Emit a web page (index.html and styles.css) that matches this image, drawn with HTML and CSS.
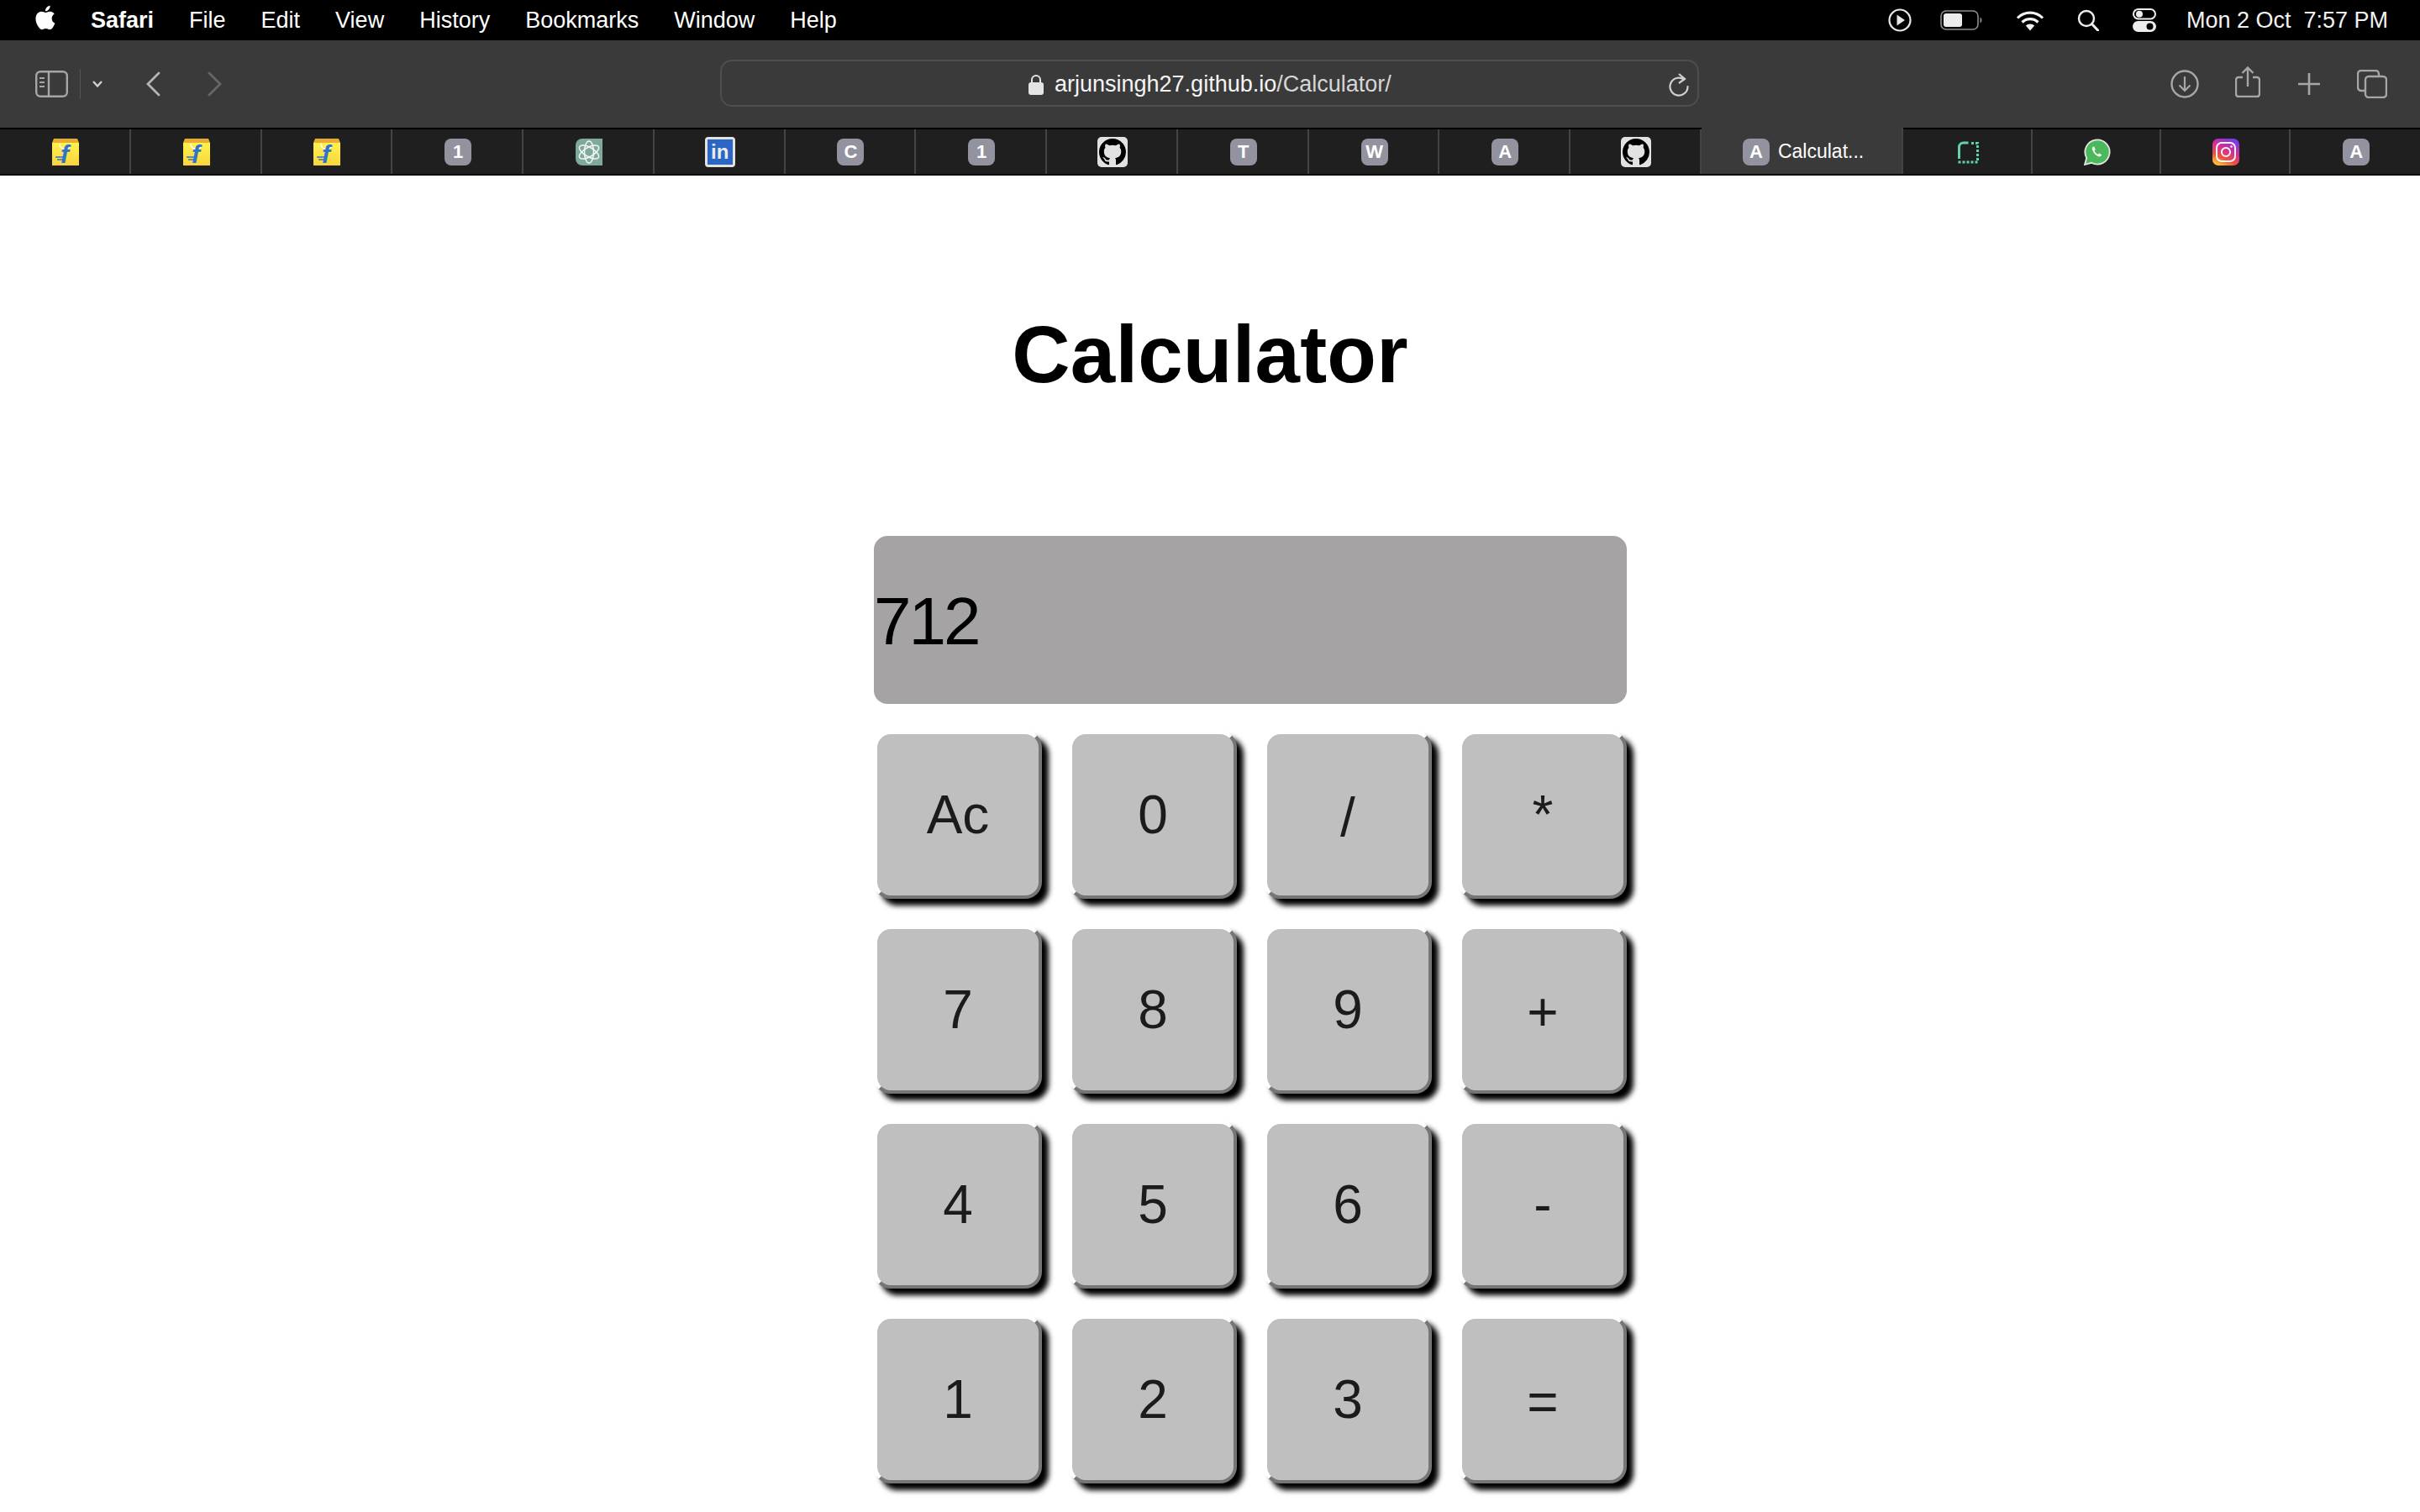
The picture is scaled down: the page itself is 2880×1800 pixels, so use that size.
FILE: index.html
```html
<!DOCTYPE html>
<html lang="en">
<head>
  <meta charset="UTF-8">
  <meta name="viewport" content="width=device-width, initial-scale=1.0">
  <title>Calculator</title>
  <link rel="stylesheet" href="styles.css">
</head>
<body>
  <svg class="defs" xmlns="http://www.w3.org/2000/svg">
    <defs>
      <linearGradient id="bag" x1="0" y1="0" x2="0" y2="1">
        <stop offset="0" stop-color="#fff24f"/>
        <stop offset="1" stop-color="#f9d53e"/>
      </linearGradient>
      <linearGradient id="insta" x1="0.8" y1="0" x2="0.3" y2="1">
        <stop offset="0" stop-color="#6a3df0"/>
        <stop offset="0.4" stop-color="#d42a9e"/>
        <stop offset="0.75" stop-color="#f4503c"/>
        <stop offset="1" stop-color="#fbbd2e"/>
      </linearGradient>
      <symbol id="flipkart" viewBox="0 0 32 32">
        <path d="M2 0h28l2 5H0z" fill="#e8ad2f"/>
        <rect y="5" width="32" height="27" fill="url(#bag)"/>
        <path d="M9 6c0 9 13 9 13 0" fill="none" stroke="#fff" stroke-width="1.5"/>
        <path d="M4 22h9M6 25h7" stroke="#2f74c8" stroke-width="1.5"/>
        <text x="10" y="29" class="flip-f">f</text>
      </symbol>
      <symbol id="gpt" viewBox="0 0 32 32">
        <path d="M8 0h24v32H8a8 8 0 0 1-8-8V8a8 8 0 0 1 8-8z" fill="#7fa99b"/>
        <g fill="none" stroke="#f2f6f4" stroke-width="1.5">
          <ellipse cx="16" cy="16" rx="5.500" ry="13"/>
          <ellipse cx="16" cy="16" rx="5.500" ry="13" transform="rotate(60 16 16)"/>
          <ellipse cx="16" cy="16" rx="5.500" ry="13" transform="rotate(120 16 16)"/>
        </g>
      </symbol>
      <symbol id="github" viewBox="0 0 36 36">
        <rect width="36" height="36" rx="5" fill="#e2e2e2"/>
        <g transform="translate(2 2)">
          <path fill="#000" fill-rule="evenodd" d="M16 0C7.16 0 0 7.16 0 16c0 7.08 4.58 13.06 10.94 15.18.8.14 1.1-.34 1.1-.76 0-.38-.02-1.64-.02-2.98-4.02.74-5.06-.98-5.38-1.88-.18-.46-.96-1.88-1.64-2.26-.56-.3-1.36-1.04-.02-1.06 1.26-.02 2.16 1.16 2.46 1.64 1.44 2.42 3.74 1.74 4.66 1.32.14-1.04.56-1.74 1.02-2.14-3.56-.4-7.28-1.78-7.28-7.9 0-1.74.62-3.18 1.64-4.3-.16-.4-.72-2.04.16-4.24 0 0 1.34-.42 4.4 1.64 1.28-.36 2.64-.54 4-.54 1.36 0 2.72.18 4 .54 3.06-2.08 4.4-1.64 4.4-1.64.88 2.2.32 3.84.16 4.24 1.02 1.12 1.64 2.54 1.64 4.3 0 6.14-3.74 7.5-7.3 7.9.58.5 1.08 1.46 1.08 2.96 0 2.14-.02 3.86-.02 4.4 0 .42.3.92 1.1.76A16.03 16.03 0 0 0 32 16C32 7.16 24.84 0 16 0z"/>
        </g>
      </symbol>
      <symbol id="whatsapp" viewBox="0 0 32 32">
        <path d="M1 31l2.2-8A14.6 14.6 0 1 1 9 28.8z" fill="#4cb85c" stroke="#e4e4e4" stroke-width="1.8"/>
        <path d="M11 9.500c-1.600 1-1.600 3 0 6 1.800 3.200 4.500 5.500 7 6 1.500.2 3-.8 3.200-2.200l-3-1.800-1.500 1.200c-1.700-.8-3.400-2.600-4.200-4.300l1.200-1.400-1.300-3.300z" fill="#f4f4f4"/>
      </symbol>
      <symbol id="insta-logo" viewBox="0 0 32 32">
        <rect width="32" height="32" rx="7" fill="url(#insta)"/>
        <rect x="5" y="5" width="22" height="22" rx="6" fill="none" stroke="#fff" stroke-width="2"/>
        <circle cx="16" cy="16" r="5" fill="none" stroke="#fff" stroke-width="2"/>
        <circle cx="22.500" cy="9.500" r="1.300" fill="#fff"/>
      </symbol>
      <symbol id="dotted" viewBox="0 0 32 32">
        <path d="M5.500 24V10a5 5 0 0 1 5-5h6" fill="none" stroke="#5fd3ae" stroke-width="3"/>
        <path d="M20 5.500h7.500v22.500H4" fill="none" stroke="#5fd3ae" stroke-width="3" stroke-dasharray="3 2"/>
      </symbol>
    </defs>
  </svg>

  <header class="menubar">
    <svg class="apple" viewBox="0 0 24 24"><path fill="#fff" d="M18.710 19.500c-.83 1.240-1.710 2.450-3.050 2.470-1.340.03-1.770-.79-3.290-.79-1.530 0-2 .77-3.270.82-1.310.05-2.300-1.320-3.140-2.530C4.250 17 2.940 12.450 4.700 9.390c.87-1.520 2.430-2.480 4.120-2.510 1.280-.02 2.500.87 3.290.87.78 0 2.260-1.070 3.810-.91.65.03 2.470.26 3.640 1.980-.09.06-2.170 1.280-2.150 3.810.03 3.020 2.650 4.030 2.680 4.040-.03.07-.42 1.440-1.380 2.830M13 3.500c.73-.83 1.940-1.460 2.940-1.500.13 1.170-.34 2.350-1.040 3.190-.69.85-1.830 1.510-2.950 1.420-.15-1.150.41-2.350 1.050-3.110z"/></svg>
    <nav class="menu">
      <span class="app-name">Safari</span>
      <span>File</span>
      <span>Edit</span>
      <span>View</span>
      <span>History</span>
      <span>Bookmarks</span>
      <span>Window</span>
      <span>Help</span>
    </nav>
    <div class="status">
      <svg class="st-play" width="28" height="28" viewBox="0 0 28 28"><circle cx="14" cy="14" r="12.500" fill="none" stroke="#e8e8e8" stroke-width="2.200"/><path d="M10.500 7.500v13l9.500-6.500z" fill="#e8e8e8"/></svg>
      <svg class="st-battery" width="50" height="24" viewBox="0 0 50 24"><rect x="1" y="1" width="44" height="22" rx="6" fill="none" stroke="#8c8c8c" stroke-width="1.600"/><rect x="4" y="4" width="22" height="16" rx="3" fill="#ececec"/><path d="M47.500 8.500c1.500.8 2 2 2 3.500s-.5 2.700-2 3.500z" fill="#8c8c8c"/></svg>
      <svg class="st-wifi" width="34" height="25" viewBox="0 0 34 25"><g fill="none" stroke="#f2f2f2" stroke-width="3.200"><path d="M2 9.500a21 21 0 0 1 30 0"/><path d="M7.500 14.500a13.500 13.500 0 0 1 19 0"/></g><path d="M11.800 18.500a7.500 7.500 0 0 1 10.400 0L17 24.500z" fill="#f2f2f2"/></svg>
      <svg class="st-search" width="26" height="26" viewBox="0 0 26 26"><circle cx="11" cy="11" r="9" fill="none" stroke="#eee" stroke-width="2.400"/><path d="M17.500 17.500l7 7.500" stroke="#eee" stroke-width="3" stroke-linecap="round"/></svg>
      <svg class="st-control" width="28" height="28" viewBox="0 0 28 28"><rect x="1" y="1" width="26" height="11.500" rx="5.700" fill="none" stroke="#eee" stroke-width="2"/><circle cx="8" cy="6.700" r="4" fill="#eee"/><rect x="0" y="15" width="28" height="13" rx="6.500" fill="#eee"/><circle cx="20.500" cy="21.500" r="4" fill="#000"/></svg>
      <span class="clock">Mon 2 Oct&nbsp; 7:57 PM</span>
    </div>
  </header>

  <div class="toolbar">
    <div class="tool-left">
      <svg class="ic-sidebar" width="39" height="32" viewBox="0 0 39 32"><rect x="1.200" y="1.200" width="36.600" height="29.600" rx="5" fill="none" stroke="#a6a6a6" stroke-width="2.400"/><path d="M16 1v30" stroke="#a6a6a6" stroke-width="2.400"/><path d="M5 9h6M5 14h6M5 19h6" stroke="#a6a6a6" stroke-width="2.200"/></svg>
      <span class="tool-sep"></span>
      <svg class="ic-drop" width="14" height="10" viewBox="0 0 14 10"><path d="M2 2l5 5.500L12 2" fill="none" stroke="#cfcfcf" stroke-width="2.400"/></svg>
      <svg class="ic-back" width="18" height="30" viewBox="0 0 18 30"><path d="M16 2L3 15l13 13" fill="none" stroke="#b5b5b5" stroke-width="2.800" stroke-linecap="round"/></svg>
      <svg class="ic-forward" width="18" height="30" viewBox="0 0 18 30"><path d="M2 2l13 13L2 28" fill="none" stroke="#666" stroke-width="2.800" stroke-linecap="round"/></svg>
    </div>
    <div class="urlbar">
      <svg class="lock" width="18" height="25" viewBox="0 0 18 25"><path d="M4 11V7a5 5 0 0 1 10 0v4" fill="none" stroke="#e4e4e4" stroke-width="2"/><rect y="10" width="18" height="15" rx="3" fill="#e4e4e4"/></svg>
      <span class="url">arjunsingh27.github.io<span class="url-path">/Calculator/</span></span>
      <svg class="reload" width="26" height="28" viewBox="0 0 26 28"><path d="M19 7.500A10.500 10.500 0 1 0 23.500 16" fill="none" stroke="#d0d0d0" stroke-width="2.200" stroke-linecap="round"/><path d="M13 1l7 6-7 5" fill="none" stroke="#d0d0d0" stroke-width="2.200"/></svg>
    </div>
    <div class="tool-right">
      <svg class="ic-download" width="34" height="34" viewBox="0 0 34 34"><circle cx="17" cy="17" r="15.500" fill="none" stroke="#a6a6a6" stroke-width="2.400"/><path d="M17 8v17M10.500 18.500L17 25l6.500-6.500" fill="none" stroke="#a6a6a6" stroke-width="2.200"/></svg>
      <svg class="ic-share" width="30" height="37" viewBox="0 0 30 37"><path d="M9 13H4a3 3 0 0 0-3 3v17a3 3 0 0 0 3 3h22a3 3 0 0 0 3-3V16a3 3 0 0 0-3-3h-5" fill="none" stroke="#a6a6a6" stroke-width="2.400"/><path d="M15 24V2M8.500 8L15 1.500 21.500 8" fill="none" stroke="#a6a6a6" stroke-width="2.400"/></svg>
      <svg class="ic-plus" width="28" height="28" viewBox="0 0 28 28"><path d="M14 1v26M1 14h26" stroke="#a6a6a6" stroke-width="2.600"/></svg>
      <svg class="ic-tabs" width="36" height="34" viewBox="0 0 36 34"><path d="M9 25H5a4 4 0 0 1-4-4V5a4 4 0 0 1 4-4h17a4 4 0 0 1 4 4v3" fill="none" stroke="#a6a6a6" stroke-width="2.400"/><rect x="10" y="8" width="25" height="25" rx="4" fill="none" stroke="#a6a6a6" stroke-width="2.400"/></svg>
    </div>
  </div>

  <div class="tabs">
    <div class="tab"><svg class="fav"><use href="#flipkart"/></svg></div>
    <div class="tab"><svg class="fav"><use href="#flipkart"/></svg></div>
    <div class="tab"><svg class="fav"><use href="#flipkart"/></svg></div>
    <div class="tab"><span class="letter">1</span></div>
    <div class="tab"><svg class="fav"><use href="#gpt"/></svg></div>
    <div class="tab"><span class="linkedin"><span class="in">in</span></span></div>
    <div class="tab"><span class="letter">C</span></div>
    <div class="tab"><span class="letter">1</span></div>
    <div class="tab"><svg class="fav-big"><use href="#github"/></svg></div>
    <div class="tab"><span class="letter">T</span></div>
    <div class="tab"><span class="letter">W</span></div>
    <div class="tab"><span class="letter">A</span></div>
    <div class="tab"><svg class="fav-big"><use href="#github"/></svg></div>
    <div class="tab active"><span class="letter">A</span><span class="tab-title">Calculat...</span></div>
    <div class="tab narrow"><svg class="fav"><use href="#dotted"/></svg></div>
    <div class="tab narrow"><svg class="fav"><use href="#whatsapp"/></svg></div>
    <div class="tab narrow"><svg class="fav"><use href="#insta-logo"/></svg></div>
    <div class="tab narrow last"><span class="letter">A</span></div>
  </div>

  <main class="page">
    <h1>Calculator</h1>
    <div class="calc">
      <div class="display">712</div>
      <div class="keys">
        <button>Ac</button>
        <button>0</button>
        <button class="low">/</button>
        <button>*</button>
        <button>7</button>
        <button>8</button>
        <button>9</button>
        <button class="low">+</button>
        <button>4</button>
        <button>5</button>
        <button>6</button>
        <button>-</button>
        <button>1</button>
        <button>2</button>
        <button>3</button>
        <button class="low">=</button>
      </div>
    </div>
  </main>
</body>
</html>
```

FILE: styles.css
```css
* {
  box-sizing: border-box;
}
html, body {
  margin: 0;
  height: 1800px;
  overflow: hidden;
}
body {
  background-color: #fff;
  color: #000;
  font-family: "Liberation Sans", Arial, sans-serif;
}
.defs {
  display: block;
  width: 0;
  height: 0;
}
.flip-f {
  font: italic bold 30px "Liberation Sans", Arial, sans-serif;
  fill: #2f74c8;
}

/* menu bar */
.menubar {
  height: 48px;
  background-color: #000;
  color: #fff;
  display: flex;
  align-items: center;
  font-size: 27px;
  padding-left: 40px;
  padding-right: 38px;
}
.apple {
  width: 34px;
  height: 34px;
  margin-left: -3px;
  margin-top: -6px;
}
.menu {
  display: flex;
  gap: 42px;
  margin-left: 37px;
}
.app-name {
  font-weight: bold;
}
.status {
  display: flex;
  align-items: center;
  margin-left: auto;
}
.st-battery { margin-left: 34px; }
.st-wifi { margin-left: 40px; }
.st-search { margin-left: 39px; }
.st-control { margin-left: 40px; }
.clock {
  margin-left: 36px;
  font-size: 27px;
  color: #f2f2f2;
}

/* toolbar */
.toolbar {
  height: 104px;
  background-color: #3a3a3a;
  display: flex;
  align-items: center;
}
.tool-left {
  width: 857px;
  display: flex;
  align-items: center;
  padding-left: 42px;
}
.tool-sep {
  width: 1px;
  height: 36px;
  background-color: #555;
  margin-left: 14px;
}
.ic-drop { margin-left: 13px; }
.ic-back { margin-left: 50px; }
.ic-forward { margin-left: 56px; }
.urlbar {
  width: 1165px;
  height: 56px;
  border: 2px solid #4e4e4e;
  border-radius: 14px;
  display: flex;
  align-items: center;
  padding-left: 365px;
  padding-right: 9px;
  padding-top: 3px;
  margin-top: -2px;
}
.lock {
  margin-right: 13px;
}
.url {
  font-size: 27px;
  color: #f4f4f4;
  white-space: nowrap;
}
.url-path {
  color: #d6d6d6;
}
.reload {
  margin-left: auto;
}
.tool-right {
  flex: 1;
  display: flex;
  align-items: center;
  padding-left: 561px;
}
.ic-share { margin-left: 43px; margin-top: -6px; }
.ic-plus { margin-left: 44px; }
.ic-tabs { margin-left: 43px; }

/* tab strip */
.tabs {
  height: 57px;
  background-color: #1f1f1f;
  border-top: 2px solid #000;
  border-bottom: 2px solid #000;
  display: flex;
}
.tab {
  width: 155.77px;
  height: 53px;
  padding-left: 2px;
  border-right: 2px solid #444;
  display: flex;
  align-items: center;
  justify-content: center;
}
.tab.narrow {
  width: 153.75px;
}
.tab.last {
  border-right: none;
}
.tab.active {
  width: 240px;
  background-color: #3a3a3a;
  height: 55px;
  margin-top: -2px;
  padding-top: 2px;
  justify-content: flex-start;
  padding-left: 49px;
}
.tab-title {
  color: #fff;
  font-size: 23px;
  margin-left: 10px;
  white-space: nowrap;
}
.fav {
  width: 32px;
  height: 32px;
}
.fav-big {
  width: 36px;
  height: 36px;
}
.letter {
  width: 32px;
  height: 32px;
  border-radius: 8px;
  background-color: #9393a0;
  color: #fff;
  font-size: 22px;
  font-weight: bold;
  display: flex;
  align-items: center;
  justify-content: center;
}
.linkedin {
  width: 36px;
  height: 36px;
  border-radius: 4px;
  background-color: #e2e2e2;
  padding: 3px;
  display: flex;
}
.in {
  flex: 1;
  background-color: #2b67c2;
  color: #eaeaea;
  font-size: 24px;
  font-weight: bold;
  line-height: 30px;
  text-align: center;
}

/* page */
.page {
  height: 1591px;
  overflow: hidden;
}
h1 {
  margin: 0;
  padding-top: 158px;
  font-size: 96px;
  line-height: 110px;
  font-weight: bold;
  letter-spacing: 0.2px;
  text-align: center;
}
.calc {
  width: 896px;
  margin-left: 1040px;
  margin-top: 161px;
}
.display {
  height: 200px;
  background-color: #a5a3a4;
  border-radius: 16px;
  font-size: 80px;
  letter-spacing: -3px;
  padding-top: 4px;
  display: flex;
  align-items: center;
}
.keys {
  display: grid;
  grid-template-columns: repeat(4, 200px);
  grid-auto-rows: 200px;
  gap: 32px;
  margin-top: 32px;
}
button {
  font-family: "Liberation Sans", Arial, sans-serif;
  font-size: 64px;
  color: #1b1b1b;
  background-color: #bfbfbf;
  border: 4px solid;
  border-color: #fff #767676 #767676 #fff;
  border-radius: 20px;
  box-shadow: 8px 8px 6px #000;
  padding: 0;
}
button.low {
  padding-top: 6px;
}
```
